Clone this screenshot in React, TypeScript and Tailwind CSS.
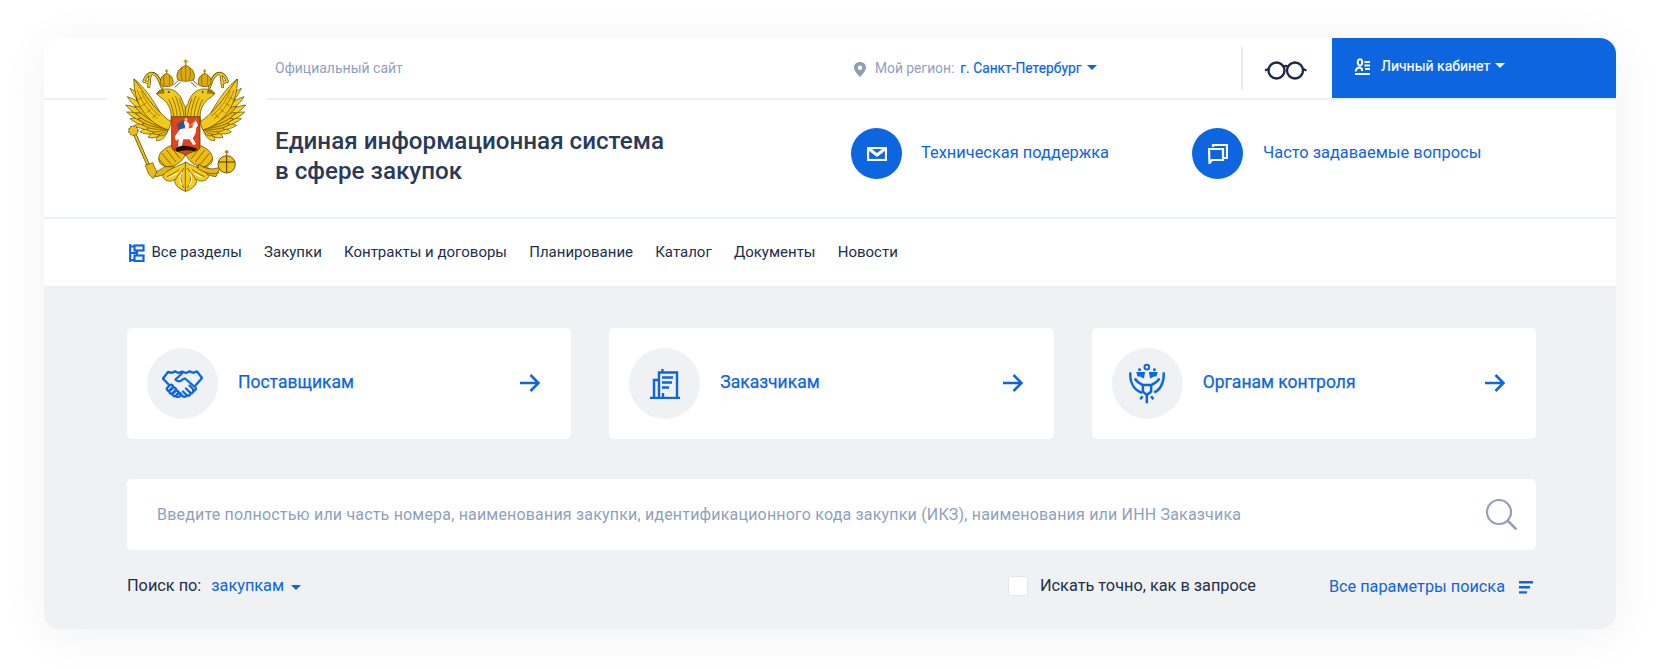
const PX = 205
const PY = 265

// wing feather tips, the base of each feather is the shoulder point
const outerTips = [
  [170, 302], [145, 292], [120, 276], [104, 256], [90, 236], [80, 216], [77, 195], [82, 170], [90, 145], [102, 117],
]
const innerTips = [
  [176, 286], [158, 280], [140, 268], [126, 252], [114, 236], [106, 218], [104, 198], [108, 176], [114, 155],
]

const Feather = ({ tip, w, fill }: { tip: number[]; w: number; fill: string }) => {
  const dx = tip[0] - PX
  const dy = tip[1] - PY
  const len = Math.hypot(dx, dy)
  const angle = (Math.atan2(dy, dx) * 180) / Math.PI + 90
  return (
    <path
      transform={`translate(${PX} ${PY}) rotate(${angle})`}
      d={`M0 0C${w} ${-len * 0.4} ${w} ${-len * 0.8} 0 ${-len}C${-w} ${-len * 0.8} ${-w} ${-len * 0.4} 0 0Z`}
      fill={fill}
      stroke="#4a3a00"
      strokeWidth="1.8"
    />
  )
}

const HalfCrest = () => (
  <g>
    {/* ribbon */}
    <path d="M186 142C180 122 172 100 154 100C142 102 136 112 132 124M154 100C146 108 150 124 146 140M132 124L146 128" fill="none" stroke="#4f3d00" strokeWidth="9" strokeLinecap="round" />
    <path d="M186 142C180 122 172 100 154 100C142 102 136 112 132 124M154 100C146 108 150 124 146 140M132 124L146 128" fill="none" stroke="#f0c81c" strokeWidth="5.5" strokeLinecap="round" />
    {/* wing */}
    {outerTips.map((t, i) => (
      <Feather key={i} tip={t} w={13} fill="#f6d020" />
    ))}
    {innerTips.map((t, i) => (
      <Feather key={i} tip={t} w={12} fill="#ecbd12" />
    ))}
    <path d="M102 117C118 136 140 176 168 205C180 218 196 234 214 246L206 270C176 262 146 240 128 212C112 190 100 150 102 117Z" fill="#f2c81a" stroke="#4a3a00" strokeWidth="2" />
    <path d="M112 150C122 180 142 212 172 236M124 154C134 180 152 206 180 228M114 178L128 172M124 198L138 190M140 218L152 208M158 234L168 222" fill="none" stroke="#7a5e00" strokeWidth="2" />
    {/* neck and head */}
    <path d="M170 162C174 150 190 146 205 147C228 148 244 168 250 190L258 206V262L212 244C218 214 206 192 190 178C182 172 176 168 170 162Z" fill="#f2c81a" stroke="#4f3d00" strokeWidth="2" />
    <path d="M226 168C236 190 242 216 244 250M216 172C226 190 232 216 232 246M206 178C216 196 222 218 222 244M238 176C246 196 252 216 254 252" stroke="#7a5e00" strokeWidth="2.4" fill="none" />
    <path d="M170 162C174 152 182 150 190 150L192 160C184 158 176 160 170 162Z" fill="#a98500" stroke="#4f3d00" strokeWidth="1.5" />
    <circle cx="206" cy="156" r="3" fill="#25406e" />
    {/* side crown */}
    <path d="M182 134C176 114 190 104 200 100C210 104 224 114 218 134C208 142 192 142 182 134Z" fill="#dcaa0b" stroke="#4f3d00" strokeWidth="2" />
    <path d="M192 106C190 116 191 126 193 136M208 106C210 116 209 126 207 136" stroke="#7a5e00" strokeWidth="2" fill="none" />
    <path d="M200 100V88M195 93H205" stroke="#a88200" strokeWidth="3.5" />
    <path d="M220 136L236 120M224 142L242 126" stroke="#5a4500" strokeWidth="2.6" />
    {/* leg and claw */}
    <path d="M215 316C188 326 170 344 178 366C186 384 218 384 238 368C250 358 256 348 258 336Z" fill="#ecbe12" stroke="#4f3d00" strokeWidth="2" />
    <path d="M186 340L214 374M200 330L228 366M216 324L240 356M176 356L196 380" stroke="#6e5400" strokeWidth="2.4" fill="none" />
    <path d="M194 380C184 388 172 394 160 398L166 410C186 408 208 398 224 380Z" fill="#e4b60e" stroke="#4f3d00" strokeWidth="2" />
    {/* tail */}
    <path d="M258 366C236 378 200 388 188 408C192 424 214 428 224 418C222 434 236 448 258 454Z" fill="#f4ca1c" stroke="#4f3d00" strokeWidth="2" />
    <path d="M252 384C240 398 238 424 252 444M238 388C226 398 210 406 200 410M226 420C230 410 238 402 246 394" stroke="#4f3d00" strokeWidth="2" fill="none" />
    <path d="M246 396C238 408 238 424 246 436M232 400C222 406 214 410 208 412" stroke="#ffffff" strokeWidth="3.4" fill="none" />
  </g>
)

const Crest = () => (
  <svg viewBox="21 0 477 510" className="w-[159px] h-[170px]">
    <HalfCrest />
    <g transform="matrix(-1 0 0 1 514 0)">
      <HalfCrest />
    </g>
    {/* main crown */}
    <path d="M232 118C226 94 242 82 257 76C272 82 288 94 282 118C268 126 246 126 232 118Z" fill="#dcaa0b" stroke="#4f3d00" strokeWidth="2" />
    <path d="M245 84C241 96 243 108 247 120M269 84C273 96 271 108 267 120M257 78V122" stroke="#7a5e00" strokeWidth="2" fill="none" />
    <path d="M257 76V58M251 64H263" stroke="#c69a08" strokeWidth="5" />
    {/* scepter */}
    <path d="M104 282L160 410" stroke="#4f3d00" strokeWidth="10" />
    <path d="M104 282L160 410" stroke="#eac016" strokeWidth="6" />
    <circle cx="100" cy="272" r="14" fill="#eac016" stroke="#4f3d00" strokeWidth="3" strokeDasharray="6 3" />
    <path d="M136 376L158 368L170 396L160 416L146 402Z" fill="#e8bc14" stroke="#4f3d00" strokeWidth="2" />
    {/* orb */}
    <path d="M296 372C316 388 338 390 358 382L356 398C332 406 310 396 294 386Z" fill="#e6b810" stroke="#4f3d00" strokeWidth="2" />
    <circle cx="380" cy="373" r="26" fill="#eec116" stroke="#4f3d00" strokeWidth="2.5" />
    <path d="M355 366H405M380 348V398" stroke="#4f3d00" strokeWidth="3" />
    <path d="M380 346V330M374 336H386" stroke="#a88200" strokeWidth="4.5" />
    {/* shield */}
    <path d="M215 230H300V322C300 334 270 334 257 346C244 334 215 334 215 322Z" fill="#e2431b" stroke="#5a4500" strokeWidth="2.5" />
    {/* horse */}
    <path d="M240 268C252 262 270 268 278 262C276 254 282 246 290 244L294 256L288 264C290 276 284 288 278 294L288 312L280 316L268 298L250 298L244 322L234 320L236 296L228 302L224 290Z" fill="#ffffff" />
    {/* rider */}
    <path d="M254 264L250 246L258 240L268 252L264 268Z" fill="#f4f4f4" />
    <path d="M230 254L250 240L256 262L236 270Z" fill="#31558f" />
    <path d="M228 300L290 238" stroke="#f4f4f4" strokeWidth="1.6" />
    <circle cx="258" cy="238" r="4" fill="#f3d9c0" />
    {/* dragon */}
    <path d="M226 328C238 312 262 316 292 326L284 334C266 328 246 330 232 336Z" fill="#1c1208" />
  </svg>
)

const Caret = ({ className }: { className: string }) => (
  <svg viewBox="0 0 10 5" className={className} fill="currentColor">
    <path d="M0 0H10L5 5Z" />
  </svg>
)

const ArrowRight = () => (
  <svg viewBox="0 0 20 20" className="w-[20px] h-[20px] text-[#0d65e0] relative -top-[1px]" fill="none" stroke="currentColor" strokeWidth="2.6">
    <path d="M0 10H18.5M10.5 2L18.5 10L10.5 18" />
  </svg>
)

const HandshakeIcon = () => (
  <svg viewBox="0 0 41 28" className="w-[41px] h-[28px]" fill="none" stroke="currentColor" strokeWidth="2.3" strokeLinejoin="round" strokeLinecap="round">
    <path d="M1 8.5L6 2L10 2.8L13 1.4L16.5 3L20 1.6L24 3L27.5 1.4L31 2.8L35 1.4L40 8L33.5 15.5" />
    <path d="M20 3.5L13.5 9.5C15 12 18 12 20.5 9.5L23 8.5L33.5 17.5C34.8 19.2 32.8 21.4 31 20" />
    <path d="M7.5 15.5L1 8.5" />
    <path d="M31 20C32 22 30 24 28 22.5M28 22.5C29 24.5 27 26.6 25 25M25 25C24.6 26.8 22.2 27.4 20.8 26.2L18.5 24.4" />
    <path d="M5.4 17.6C3.8 19.4 6 21.6 7.8 20.4L10.4 17.6C12 16 9.4 13.6 7.8 15.2Z" />
    <path d="M7.8 20.6C6.4 22.4 8.6 24.6 10.4 23.2L13.4 20.2C14.8 18.6 12.4 16.4 10.8 18Z" />
    <path d="M11 23.4C9.8 25.2 12 27 13.6 25.8L16 23.4C17.4 21.8 15 19.6 13.4 21.2Z" />
    <path d="M14.6 25.4C13.8 27 16 28 17.2 26.8L18.6 25.4C19.8 24 18 22.2 16.4 23.4" />
    <path d="M27.5 15.5L30.5 18.5M24 18.5L27.5 22M21 21.5L24.5 25" />
  </svg>
)

const BuildingIcon = () => (
  <svg viewBox="0 0 30 30" className="w-[30px] h-[30px]" fill="none" stroke="currentColor" strokeWidth="2.4">
    <path d="M0 29H30" />
    <path d="M4 29V11H9M9 29V3.5H27V29" />
    <path d="M12.5 0V3.5" />
    <path d="M12 8.5H23M12 13.5H22M12 18.5H19" />
    <path d="M13 24V29" />
  </svg>
)

const ControlIcon = () => (
  <svg viewBox="145 132 115 126" className="w-[38px] h-[42px]" fill="none" stroke="currentColor" strokeWidth="7.5">
    <circle cx="202" cy="144" r="7" strokeWidth="6" />
    <circle cx="180" cy="152" r="4.5" fill="currentColor" stroke="none" />
    <circle cx="225" cy="152" r="4.5" fill="currentColor" stroke="none" />
    <path d="M170 159H197L193 178L181 172H174Z" fill="currentColor" stroke="none" />
    <path d="M235 159H208L212 178L224 172H231Z" fill="currentColor" stroke="none" />
    <path d="M152 160C150 192 164 214 188 222" />
    <path d="M253 160C255 192 241 214 224 220" />
    <path d="M166 178C172 190 182 194 190 198H215C224 194 234 190 240 178" />
    <path d="M190 198V218L202 228L215 218V198" />
    <path d="M202 228V253M182 241L189 232M222 241L215 232" />
  </svg>
)

const CardLink = ({ title, icon }: { title: string; icon: React.ReactNode }) => (
  <div className="h-[111px] bg-white rounded-[5px] flex items-center pl-[20px] pr-[31px]">
    <div className="w-[71px] h-[71px] rounded-full bg-[#f0f1f3] flex items-center justify-center text-[#0d65e0] shrink-0">
      {icon}
    </div>
    <span className="ml-[20px] flex-1 text-[17.5px] text-[#0d65e0] [-webkit-text-stroke:0.25px] relative -top-[1px]">{title}</span>
    <ArrowRight />
  </div>
)

const navItems = ['Закупки', 'Контракты и договоры', 'Планирование', 'Каталог', 'Документы', 'Новости']

export default function App() {
  return (
    <div className="h-[669px] bg-white overflow-hidden pt-[38px] pl-[44px] font-['Roboto',sans-serif]">
      <div className="relative w-[1572px] h-[591px] rounded-[16px] bg-white flex flex-col shadow-[0_6px_50px_rgba(0,0,0,0.06)]">
        {/* top bar */}
        <div className="h-[62px] flex border-b-2 border-[#eaf0fa] shrink-0">
          <div className="w-[809px] pl-[231px] pt-[21px] text-[14px] leading-[18px] text-[#8f9fbd]">Официальный сайт</div>
          <div className="w-[388px] flex items-start pt-[21px] text-[13.8px] leading-[18px]">
            <svg viewBox="0 0 14 15" className="w-[14px] h-[15px] mt-[3px] text-[#8f9cb3]" fill="currentColor">
              <path fillRule="evenodd" d="M7 0C3.4 0 1 2.4 1 5.6C1 9.4 7 15 7 15S13 9.4 13 5.6C13 2.4 10.6 0 7 0ZM7 3.4A2.3 2.3 0 1 1 7 8A2.3 2.3 0 0 1 7 3.4Z" />
            </svg>
            <span className="ml-[8px] text-[#8f9fbd]">Мой регион:</span>
            <span className="ml-[6px] text-[#0d65e0] [-webkit-text-stroke:0.2px]">г. Санкт-Петербург</span>
            <Caret className="w-[10px] h-[5px] ml-[6px] mt-[6px] text-[#0d65e0]" />
          </div>
          <div className="w-[91px] h-[43px] mt-[9px] border-l-2 border-[#e9ebee] flex items-center justify-center pr-[4px]">
            <svg viewBox="0 0 43 19" className="w-[43px] h-[19px] mt-[3px] text-[#1b2a4a]" fill="none" stroke="currentColor" strokeWidth="2.4">
              <circle cx="12.5" cy="9.5" r="8" />
              <circle cx="31" cy="9.5" r="8" />
              <path d="M19.5 6C20.5 4.5 23 4.5 24 6M4.5 8L1 9.5M39 8L42.5 9.5" />
            </svg>
          </div>
          <div className="flex-1 h-[60px] bg-[#0d65e0] rounded-tr-[16px] flex items-start pl-[22px] pt-[19px] text-white text-[14px] leading-[18px] [-webkit-text-stroke:0.2px]">
            <svg viewBox="0 0 17 17" className="w-[17px] h-[17px] mt-[1px]" fill="none" stroke="currentColor" strokeWidth="2">
              <path d="M6 1.2C4 1.2 3.6 3 3.8 5C4 6.6 5 7.6 6 7.6C7 7.6 8 6.6 8.2 5C8.4 3 8 1.2 6 1.2Z" />
              <path d="M1 16H16M1.6 13.5C2 10.4 4 9.4 6 9.4L8 11V13M10.5 4H16M10.5 7.5H16M11 11H16" />
            </svg>
            <span className="ml-[10px]">Личный кабинет</span>
            <Caret className="w-[10px] h-[5px] ml-[5px] mt-[6px]" />
          </div>
        </div>

        {/* crest sits over the bar line */}
        <div className="absolute left-[63px] top-[2px] bg-white">
          <Crest />
        </div>

        {/* title row */}
        <div className="h-[119px] flex items-center border-b-2 border-[#eaf0fa] pl-[231px] pb-[10px] shrink-0">
          <div className="w-[576px] text-[24.2px] leading-[30px] font-medium text-[#2a3a58] relative top-[2px]">
            Единая информационная система
            <br />в сфере закупок
          </div>
          <div className="w-[341px] flex items-center">
            <div className="w-[51px] h-[51px] rounded-full bg-[#0d65e0] flex items-center justify-center">
              <svg viewBox="0 0 20 14" className="w-[20px] h-[14px]" fill="none" stroke="white" strokeWidth="2.2">
                <rect x="1" y="1" width="18" height="12" />
                <path d="M1.5 1.5L10 8L18.5 1.5" strokeWidth="3" />
              </svg>
            </div>
            <span className="ml-[19px] text-[16.4px] text-[#0d65e0]">Техническая поддержка</span>
          </div>
          <div className="flex items-center">
            <div className="w-[51px] h-[51px] rounded-full bg-[#0d65e0] flex items-center justify-center">
              <svg viewBox="0 0 20 20" className="w-[20px] h-[20px]" fill="none" stroke="white" strokeWidth="2.2">
                <path d="M5 3V1H19V14H16" />
                <path d="M1 5H15V16H4L1.5 19Z" />
              </svg>
            </div>
            <span className="ml-[20px] text-[16.4px] text-[#0d65e0]">Часто задаваемые вопросы</span>
          </div>
        </div>

        {/* nav */}
        <div className="h-[69px] flex items-center border-b-2 border-[#eaf0fa] pl-[85px] text-[15px] text-[#212e4a] gap-[22.2px] shrink-0">
          <div className="flex items-center">
            <svg viewBox="0 0 16 18" className="w-[16px] h-[18px] text-[#0d65e0]" fill="none" stroke="currentColor" strokeWidth="2.2">
              <path d="M1.2 0V18M1 2.5H5M1 16H5M1 9H9" />
              <rect x="5.5" y="1.5" width="9" height="5" />
              <rect x="5.5" y="11.5" width="9" height="5.5" />
              <path d="M8 7V11" />
            </svg>
            <span className="ml-[6.5px]">Все разделы</span>
          </div>
          {navItems.map((item) => (
            <span key={item}>{item}</span>
          ))}
        </div>

        {/* grey section */}
        <div className="flex-1 bg-[#f0f1f3] rounded-b-[16px] px-[83px] pt-[40px]">
          <div className="grid grid-cols-3 gap-[38px] w-[1409px]">
            <CardLink title="Поставщикам" icon={<HandshakeIcon />} />
            <CardLink title="Заказчикам" icon={<BuildingIcon />} />
            <CardLink title="Органам контроля" icon={<ControlIcon />} />
          </div>

          <div className="mt-[40px] w-[1409px] h-[71px] bg-white rounded-[5px] flex items-center justify-between pl-[30px] pr-[19px]">
            <span className="text-[16px] text-[#8f9fbd] tracking-[0.185px]">
              Введите полностью или часть номера, наименования закупки, идентификационного кода закупки (ИКЗ), наименования или ИНН Заказчика
            </span>
            <svg viewBox="0 0 31 31" className="w-[31px] h-[31px] text-[#8f9fbd]" fill="none" stroke="currentColor" strokeWidth="2.2">
              <circle cx="13" cy="13" r="12" />
              <path d="M21.5 21.5L30.5 30.5" strokeWidth="2.6" />
            </svg>
          </div>

          <div className="mt-[24px] w-[1409px] flex items-center text-[16.3px] leading-[24px]">
            <span className="text-[#212e4a]">Поиск по:</span>
            <span className="ml-[10px] text-[#0d65e0]">закупкам</span>
            <Caret className="w-[10px] h-[5px] ml-[7px] mt-[2px] text-[#0d65e0]" />
            <div className="ml-auto flex items-center">
              <span className="w-[20px] h-[20px] rounded-[3px] bg-white border border-[#e3e5e9]"></span>
              <span className="ml-[12px] text-[#212e4a]">Искать точно, как в запросе</span>
            </div>
            <div className="ml-[73px] flex items-center text-[#0d65e0] relative top-[1px] pr-[3px]">
              <span>Все параметры поиска</span>
              <svg viewBox="0 0 14 13" className="w-[14px] h-[13px] ml-[14px]" fill="currentColor">
                <path d="M0 0H14V2.4H0ZM0 5H11V7.4H0ZM0 10.2H8V12.6H0Z" />
              </svg>
            </div>
          </div>
        </div>
      </div>
    </div>
  )
}
